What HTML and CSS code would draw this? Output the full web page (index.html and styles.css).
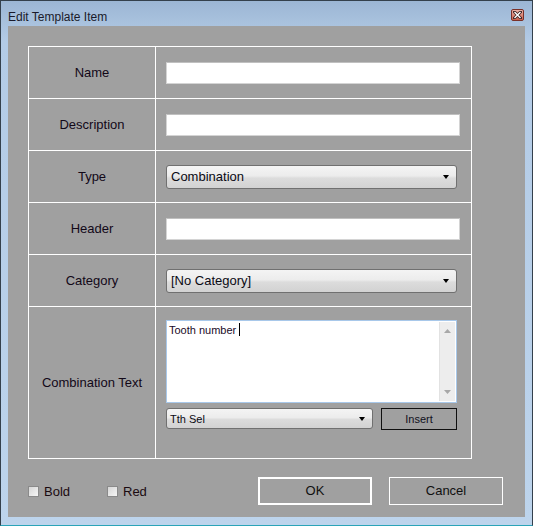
FILE: index.html
```html
<!DOCTYPE html>
<html>
<head>
<meta charset="utf-8">
<link rel="stylesheet" href="styles.css">
</head>
<body>
<div class="window">
  <div class="titlebar">
    <span class="title">Edit Template Item</span>
    <span class="close">
      <svg width="9" height="8" viewBox="0 0 9 8"><path d="M1.5 1 L7.5 7 M7.5 1 L1.5 7" stroke="#3a2020" stroke-width="3" stroke-linecap="square"/><path d="M1.5 1 L7.5 7 M7.5 1 L1.5 7" stroke="#ffffff" stroke-width="1.4"/></svg>
    </span>
  </div>
  <div class="client">
    <div class="form">
      <div class="label">Name</div>
      <div class="field"><div class="textbox"></div></div>
      <div class="label">Description</div>
      <div class="field"><div class="textbox"></div></div>
      <div class="label">Type</div>
      <div class="field"><div class="combo"><span>Combination</span><i class="arrow"></i></div></div>
      <div class="label">Header</div>
      <div class="field"><div class="textbox"></div></div>
      <div class="label">Category</div>
      <div class="field"><div class="combo"><span>[No Category]</span><i class="arrow"></i></div></div>
      <div class="label">Combination Text</div>
      <div class="field field-tall">
        <div class="memo">
          <div class="memo-text">Tooth number <span class="caret"></span></div>
          <div class="vscroll">
            <svg width="7" height="4" viewBox="0 0 7 4"><path d="M0 4 L3.5 0 L7 4 Z" fill="#a8a8a8"/></svg>
            <svg width="7" height="4" viewBox="0 0 7 4"><path d="M0 0 L3.5 4 L7 0 Z" fill="#a8a8a8"/></svg>
          </div>
        </div>
        <div class="memo-tools">
          <div class="combo combo-small"><span>Tth Sel</span><i class="arrow"></i></div>
          <div class="insert">Insert</div>
        </div>
      </div>
    </div>
    <div class="bottom">
      <label class="check check-bold"><span class="box"></span>Bold</label>
      <label class="check check-red"><span class="box"></span>Red</label>
      <div class="btn btn-default">OK</div>
      <div class="btn btn-cancel">Cancel</div>
    </div>
  </div>
</div>
</body>
</html>
```

FILE: styles.css
```css
html, body {
  margin: 0;
  padding: 0;
  background: #b9d1ea;
}
.window {
  width: 533px;
  height: 526px;
  box-sizing: border-box;
  border: 1px solid #34404c;
  border-bottom-color: #2aa4b8;
  background: linear-gradient(#9cb6d4 0px, #b3cbe6 40px, #bdd4ec 100%);
  display: flex;
  flex-direction: column;
  font-family: "Liberation Sans", Arial, sans-serif;
  font-size: 12px;
  color: #101010;
}
.titlebar {
  height: 25px;
  display: flex;
  align-items: center;
  padding-left: 7px;
  padding-right: 8px;
}
.title {
  flex: 1;
  font-size: 12px;
  color: #1a1a2a;
  padding-top: 7px;
}
.close {
  width: 11px;
  height: 10px;
  border: 1px solid #7a3028;
  border-radius: 2px;
  background: linear-gradient(#eab0a6, #c8604e);
  display: flex;
  align-items: center;
  justify-content: center;
  margin-top: 3px;
}
.client {
  margin: 0 7px 8px 7px;
  flex: 1;
  background: #a0a0a0;
  padding: 20px 0 0 20px;
}
.form {
  width: 444px;
  display: grid;
  grid-template-columns: 127px 1fr;
  grid-template-rows: 52px 52px 52px 52px 52px 152px;
  border-top: 1px solid #ffffff;
  border-left: 1px solid #ffffff;
  box-sizing: border-box;
}
.label, .field {
  border-right: 1px solid #ffffff;
  border-bottom: 1px solid #ffffff;
  box-sizing: border-box;
}
.label {
  display: flex;
  align-items: center;
  justify-content: center;
  font-size: 13px;
  color: #120818;
}
.field {
  display: flex;
  align-items: center;
  padding-left: 10px;
}
.textbox {
  width: 294px;
  height: 22px;
  box-sizing: border-box;
  background: #ffffff;
  border: 1px solid #d4d4d4;
  border-top-color: #c0c0c0;
  margin-top: 1px;
}
.combo {
  width: 291px;
  height: 24px;
  box-sizing: border-box;
  border: 1px solid #707070;
  border-radius: 3px;
  background: linear-gradient(#f4f4f4 0%, #ececec 45%, #dcdcdc 55%, #d2d2d2 100%);
  display: flex;
  align-items: center;
  padding-left: 4px;
  padding-right: 7px;
  font-size: 13px;
  color: #0a0a14;
}
.combo span {
  flex: 1;
}
.arrow {
  width: 0;
  height: 0;
  border-left: 3.5px solid transparent;
  border-right: 3.5px solid transparent;
  border-top: 4px solid #000000;
  margin-top: 1px;
}
.field-tall {
  flex-direction: column;
  align-items: flex-start;
  padding-top: 13px;
}
.memo {
  width: 291px;
  height: 83px;
  box-sizing: border-box;
  border: 1px solid #a8c8ea;
  background: #ffffff;
  display: flex;
}
.memo-text {
  flex: 1;
  padding: 3px 0 0 2px;
  font-size: 11px;
  color: #1a0a28;
  display: flex;
  align-items: flex-start;
}
.caret {
  display: inline-block;
  width: 1px;
  height: 13px;
  background: #000000;
  margin-left: 3px;
  margin-top: -1px;
}
.vscroll {
  width: 16px;
  margin: 1px 1px 1px 0;
  background: #ededed;
  border-left: 1px solid #e2e2e2;
  display: flex;
  flex-direction: column;
  justify-content: space-between;
  align-items: center;
  padding: 7px 0 7px 0;
  box-sizing: border-box;
}
.memo-tools {
  display: flex;
  gap: 8px;
  margin-top: 5px;
}
.combo-small {
  width: 207px;
  height: 21px;
  font-size: 11px;
  padding-left: 3px;
}
.insert {
  width: 76px;
  height: 22px;
  box-sizing: border-box;
  border: 1px solid #101010;
  display: flex;
  align-items: center;
  justify-content: center;
  font-size: 11px;
  color: #101020;
}
.bottom {
  display: flex;
  align-items: center;
  margin-top: 18px;
  height: 28px;
}
.check {
  display: flex;
  align-items: center;
  font-size: 13px;
  color: #1a0a10;
}
.check-bold {
  width: 79px;
}
.check-red {
  width: 151px;
}
.box {
  width: 11px;
  height: 11px;
  box-sizing: border-box;
  border: 1px solid #8a8a8a;
  background: linear-gradient(135deg, #d6d6d6, #f6f6f6);
  margin-right: 5px;
  margin-top: 1px;
}
.btn {
  width: 114px;
  height: 28px;
  box-sizing: border-box;
  display: flex;
  align-items: center;
  justify-content: center;
  font-size: 13px;
  color: #101010;
}
.btn-default {
  border: 2px solid #ffffff;
  padding-bottom: 2px;
}
.btn-cancel {
  margin-left: 17px;
  border: 1px solid #ffffff;
  padding-bottom: 2px;
}
```
